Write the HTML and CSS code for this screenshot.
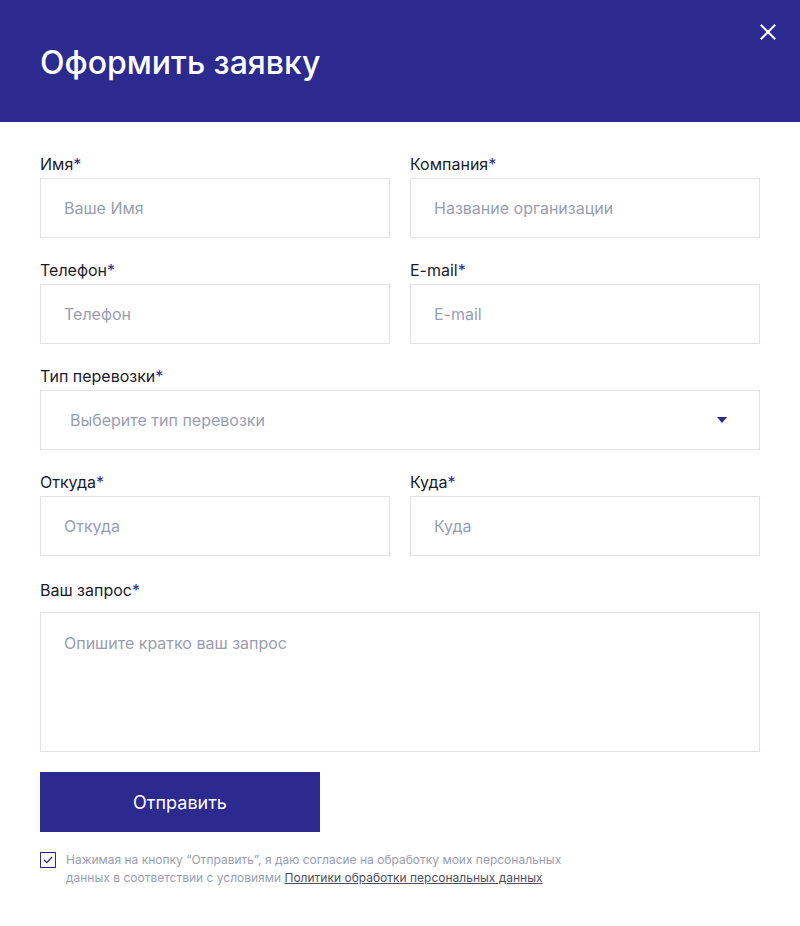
FILE: index.html
```html
<!DOCTYPE html>
<html lang="ru">
<head>
<meta charset="utf-8">
<link rel="stylesheet" href="styles.css">
</head>
<body>
<div class="modal">
  <header class="modal-head">
    <h1 class="title">Оформить заявку</h1>
    <button class="close" aria-label="Закрыть">
      <svg width="16" height="16" viewBox="0 0 16 16"><path d="M1.5 1.5L14.5 14.5M14.5 1.5L1.5 14.5" stroke="#fff" stroke-width="2" stroke-linecap="square"/></svg>
    </button>
  </header>
  <form class="form">
    <div class="grid">
      <div class="field">
        <label class="label">Имя<span class="req">*</span></label>
        <div class="input">Ваше Имя</div>
      </div>
      <div class="field">
        <label class="label">Компания<span class="req">*</span></label>
        <div class="input">Название организации</div>
      </div>
      <div class="field">
        <label class="label">Телефон<span class="req">*</span></label>
        <div class="input">Телефон</div>
      </div>
      <div class="field">
        <label class="label">E-mail<span class="req">*</span></label>
        <div class="input">E-mail</div>
      </div>
      <div class="field wide">
        <label class="label">Тип перевозки<span class="req">*</span></label>
        <div class="input select"><span>Выберите тип перевозки</span><span class="arrow"></span></div>
      </div>
      <div class="field">
        <label class="label">Откуда<span class="req">*</span></label>
        <div class="input">Откуда</div>
      </div>
      <div class="field">
        <label class="label">Куда<span class="req">*</span></label>
        <div class="input">Куда</div>
      </div>
      <div class="field wide">
        <label class="label label-ta">Ваш запрос<span class="req">*</span></label>
        <div class="input textarea">Опишите кратко ваш запрос</div>
      </div>
    </div>
    <button class="submit" type="button">Отправить</button>
    <div class="consent">
      <span class="check">
        <svg width="10" height="8" viewBox="0 0 10 8"><path d="M1 4L3.8 6.6L9 1" fill="none" stroke="#2c2a8f" stroke-width="1.3"/></svg>
      </span>
      <p class="consent-text">Нажимая на кнопку “Отправить”, я даю согласие на обработку моих персональных данных в соответствии с условиями <a class="link" href="#">Политики обработки персональных данных</a></p>
    </div>
  </form>
</div>
</body>
</html>
```

FILE: styles.css
```css
* { box-sizing: border-box; }
html, body { margin: 0; padding: 0; background: #fff; }
body { font-family: Inter, "Noto Sans", sans-serif; color: #1b1b2d; }
.modal { width: 800px; }
.modal-head {
  background: #2c2a8f;
  height: 122px;
  padding: 0 40px;
  display: flex;
  align-items: center;
  position: relative;
}
.title {
  margin: 0;
  color: #fff;
  font-weight: 500;
  font-size: 32px;
  letter-spacing: 0;
  line-height: 40px;
  padding-top: 4px;
}
.close {
  position: absolute;
  top: 24px;
  right: 24px;
  width: 16px;
  height: 16px;
  padding: 0;
  border: 0;
  background: none;
  display: flex;
}
.form { padding: 31px 40px 40px; }
.grid {
  display: grid;
  grid-template-columns: 350px 350px;
  column-gap: 20px;
  row-gap: 21px;
}
.wide { grid-column: 1 / 3; }
.field { display: flex; flex-direction: column; }
.label {
  font-size: 16px;
  line-height: 20px;
  padding-top: 1px;
  margin-bottom: 4px;
  color: #1b1b2d;
}
.label-ta { margin-bottom: 12px; margin-top: 2px; }
.req { color: #2c2a8f; }
.input {
  height: 60px;
  border: 1px solid #e1e3ec;
  padding: 0 23px;
  display: flex;
  align-items: center;
  font-size: 16px;
  color: #9a9eaf;
}
.select { padding: 0 30px 0 29px; justify-content: space-between; }
.arrow {
  width: 0; height: 0;
  border-left: 5px solid transparent;
  border-right: 5px solid transparent;
  border-top: 6px solid #2c2a8f;
  margin-right: 2px;
}
.textarea { height: 140px; align-items: flex-start; padding-top: 20px; }
.submit {
  margin-top: 20px;
  width: 280px;
  height: 60px;
  border: 0;
  background: #2c2a8f;
  color: #fff;
  font-family: inherit;
  font-size: 18px;
  display: block;
}
.consent { display: flex; gap: 10px; margin-top: 20px; align-items: flex-start; }
.check {
  flex: none;
  width: 16px; height: 16px;
  border: 1px solid #2c2a8f;
  display: flex; align-items: center; justify-content: center;
}
.consent-text {
  margin: -1px 0 0;
  max-width: 500px;
  font-size: 12px;
  line-height: 18px;
  color: #9a9eaf;
}
.link { color: #4d4f60; text-decoration: underline; text-underline-offset: 1px; }
```
